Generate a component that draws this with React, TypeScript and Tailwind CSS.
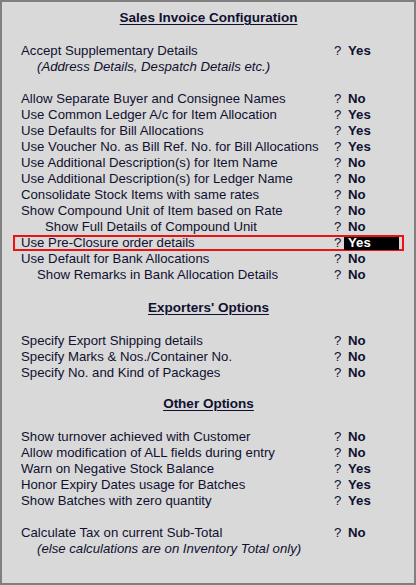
import React from 'react';

interface OptionRow {
  label: string;
  value?: string;
  indent?: number;
  italic?: boolean;
  selected?: boolean;
}

const invoiceRows: OptionRow[] = [
  { label: 'Allow Separate Buyer and Consignee Names', value: 'No' },
  { label: 'Use Common Ledger A/c for Item Allocation', value: 'Yes' },
  { label: 'Use Defaults for Bill Allocations', value: 'Yes' },
  { label: 'Use Voucher No. as Bill Ref. No. for Bill Allocations', value: 'Yes' },
  { label: 'Use Additional Description(s) for Item Name', value: 'No' },
  { label: 'Use Additional Description(s) for Ledger Name', value: 'No' },
  { label: 'Consolidate Stock Items with same rates', value: 'No' },
  { label: 'Show Compound Unit of Item based on Rate', value: 'No' },
  { label: 'Show Full Details of Compound Unit', value: 'No', indent: 24 },
  { label: 'Use Pre-Closure order details', value: 'Yes', selected: true },
  { label: 'Use Default for Bank Allocations', value: 'No' },
  { label: 'Show Remarks in Bank Allocation Details', value: 'No', indent: 16 },
];

const exporterRows: OptionRow[] = [
  { label: 'Specify Export Shipping details', value: 'No' },
  { label: 'Specify Marks & Nos./Container No.', value: 'No' },
  { label: 'Specify No. and Kind of Packages', value: 'No' },
];

const otherRows: OptionRow[] = [
  { label: 'Show turnover achieved with Customer', value: 'No' },
  { label: 'Allow modification of ALL fields during entry', value: 'No' },
  { label: 'Warn on Negative Stock Balance', value: 'Yes' },
  { label: 'Honor Expiry Dates usage for Batches', value: 'Yes' },
  { label: 'Show Batches with zero quantity', value: 'Yes' },
];

const Row = ({ label, value, indent = 0, italic, selected }: OptionRow): JSX.Element => {
  return (
    <div
      className={`flex h-4 items-center pl-2 leading-4 ${
        selected ? 'ring-2 ring-inset ring-[#ee1111]' : ''
      }`}
    >
      <div className={`w-[313px] whitespace-nowrap ${italic ? 'italic' : ''}`} style={{ paddingLeft: indent }}>
        {label}
      </div>
      {value && (
        <>
          <div className="w-[10px]">?</div>
          <div
            className={`flex h-[13px] w-[55px] items-center pl-1 font-bold ${
              selected ? 'bg-black text-white' : ''
            }`}
          >
            {value}
          </div>
        </>
      )}
    </div>
  );
};

const Heading = ({ children }: { children: React.ReactNode }): JSX.Element => (
  <div className="flex h-4 items-center justify-center leading-4">
    <span className="text-[13.5px] font-bold underline decoration-1 underline-offset-2">{children}</span>
  </div>
);

const App = (): JSX.Element => {
  return (
    <div
      className="h-[585px] w-[416px] overflow-hidden border-2 border-[#7f7f7f] bg-[#d9d9d9] pl-[11px] pr-[10px] pt-[8px] text-[13.2px] text-[#101030]"
      style={{ fontFamily: '"Liberation Sans", Arial, sans-serif' }}
    >
      <Heading>Sales Invoice Configuration</Heading>
      <div className="mt-[17px]">
        <Row label="Accept Supplementary Details" value="Yes" />
        <Row label="(Address Details, Despatch Details etc.)" indent={16} italic />
      </div>
      <div className="mt-4">
        {invoiceRows.map((r) => (
          <Row key={r.label} {...r} />
        ))}
      </div>

      <div className="mt-[17px]">
        <Heading>Exporters' Options</Heading>
      </div>
      <div className="mt-[17px]">
        {exporterRows.map((r) => (
          <Row key={r.label} {...r} />
        ))}
      </div>

      <div className="mt-[15px]">
        <Heading>Other Options</Heading>
      </div>
      <div className="mt-[17px]">
        {otherRows.map((r) => (
          <Row key={r.label} {...r} />
        ))}
      </div>

      <div className="mt-4">
        <Row label="Calculate Tax on current Sub-Total" value="No" />
        <Row label="(else calculations are on Inventory Total only)" indent={16} italic />
      </div>
    </div>
  );
};

export default App;
